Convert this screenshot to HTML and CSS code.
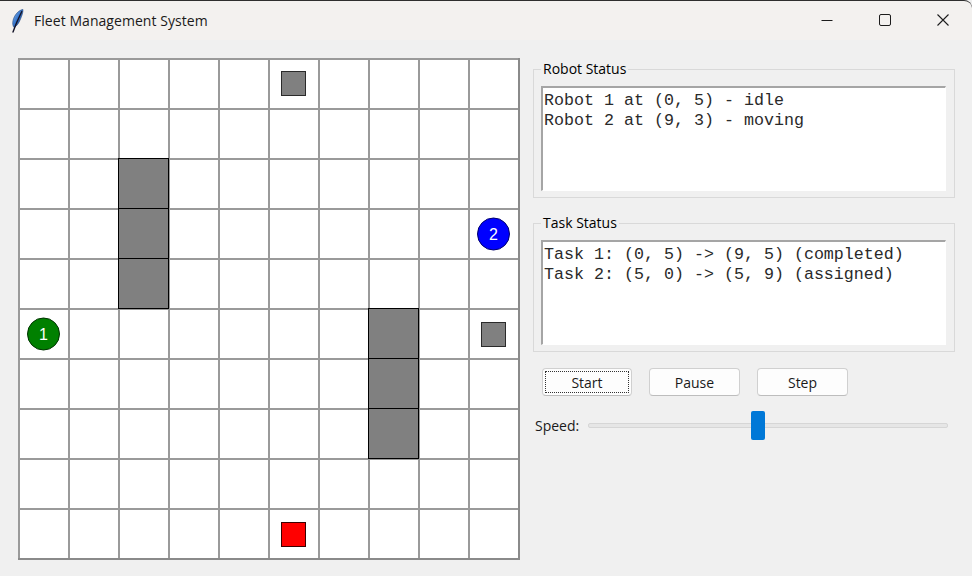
FILE: index.html
```html
<!DOCTYPE html>
<html>
<head>
<meta charset="utf-8">
<title>Fleet Management System</title>
<link rel="stylesheet" href="styles.css">
</head>
<body>
<div class="window">
  <div class="titlebar">
    <svg class="app-icon" width="14" height="26" viewBox="0 0 14 26">
      <defs>
        <linearGradient id="fg" x1="0" y1="0" x2="1" y2="1">
          <stop offset="0" stop-color="#9cc4f0"/>
          <stop offset="0.45" stop-color="#3b7bd0"/>
          <stop offset="1" stop-color="#1a3a7a"/>
        </linearGradient>
      </defs>
      <path d="M13 1.5 C 9 2, 4.5 6.5, 3 12.5 C 2.3 15.5, 2.8 18, 4 19.5 C 6.5 18.5, 9 15, 10.5 11 C 12 7.5, 13 4.5, 13 1.5 Z" fill="url(#fg)" stroke="#24467e" stroke-width="0.6"/>
      <path d="M11.8 3.5 C 9 9, 6.5 14, 3 24" stroke="#141428" stroke-width="1.4" fill="none" stroke-linecap="round"/>
    </svg>
    <span class="title">Fleet Management System</span>
    <div class="caption">
      <div class="cbtn">
        <svg width="12" height="12" viewBox="0 0 12 12"><path d="M0.5 6.5 H11.5" stroke="#1c1c1c" stroke-width="1"/></svg>
      </div>
      <div class="cbtn">
        <svg width="12" height="12" viewBox="0 0 12 12"><rect x="0.5" y="0.5" width="11" height="11" rx="1.5" fill="none" stroke="#1c1c1c" stroke-width="1"/></svg>
      </div>
      <div class="cbtn">
        <svg width="12" height="12" viewBox="0 0 12 12"><path d="M0.5 0.5 L11.5 11.5 M11.5 0.5 L0.5 11.5" stroke="#1c1c1c" stroke-width="1.1"/></svg>
      </div>
    </div>
  </div>

  <div class="client">
    <svg class="map" width="502" height="502" viewBox="0 0 502 502">
      <defs>
        <pattern id="grid" width="50" height="50" patternUnits="userSpaceOnUse">
          <rect width="50" height="50" fill="#ffffff"/>
          <rect width="2" height="50" fill="#9a9a9a"/>
          <rect width="50" height="2" fill="#9a9a9a"/>
        </pattern>
      </defs>
      <rect width="502" height="502" fill="url(#grid)"/>
      <rect x="500" y="0" width="2" height="502" fill="#8a8a8a"/>
      <rect x="0" y="500" width="502" height="2" fill="#8a8a8a"/>

      <g fill="#808080" stroke="#000000" stroke-width="1">
        <rect x="100.5" y="100.5" width="50" height="50"/>
        <rect x="100.5" y="150.5" width="50" height="50"/>
        <rect x="100.5" y="200.5" width="50" height="50"/>
        <rect x="350.5" y="250.5" width="50" height="50"/>
        <rect x="350.5" y="300.5" width="50" height="50"/>
        <rect x="350.5" y="350.5" width="50" height="50"/>
      </g>

      <rect x="263.5" y="13.5" width="24" height="24" fill="#808080" stroke="#2a2a2a" stroke-width="1"/>
      <rect x="463.5" y="264.5" width="24" height="24" fill="#808080" stroke="#2a2a2a" stroke-width="1"/>
      <rect x="263.5" y="464.5" width="24" height="24" fill="#ff0000" stroke="#3a0000" stroke-width="1"/>

      <circle cx="25.5" cy="276" r="16" fill="#008000" stroke="#003300" stroke-width="1"/>
      <text x="25.5" y="281.5" class="robot-num">1</text>
      <circle cx="475.5" cy="176" r="16" fill="#0000ff" stroke="#00006b" stroke-width="1"/>
      <text x="475.5" y="181.5" class="robot-num">2</text>
    </svg>

    <div class="side">
      <fieldset class="group">
        <legend>Robot Status</legend>
        <div class="textbox">Robot 1 at (0, 5) - idle
Robot 2 at (9, 3) - moving</div>
      </fieldset>

      <fieldset class="group group-task">
        <legend>Task Status</legend>
        <div class="textbox">Task 1: (0, 5) -&gt; (9, 5) (completed)
Task 2: (5, 0) -&gt; (5, 9) (assigned)</div>
      </fieldset>

      <div class="buttons">
        <button class="btn btn-focus"><span class="focus-ring">Start</span></button>
        <button class="btn">Pause</button>
        <button class="btn">Step</button>
      </div>

      <div class="speed">
        <span class="speed-label">Speed:</span>
        <div class="scale">
          <div class="trough"></div>
          <div class="thumb" style="left: 163px;"></div>
        </div>
      </div>
    </div>
  </div>
</div>
</body>
</html>
```

FILE: styles.css
```css
* {
  box-sizing: border-box;
}

html, body {
  margin: 0;
  padding: 0;
}

body {
  width: 972px;
  height: 576px;
  overflow: hidden;
  background: #f0f0f0;
  font-family: "Open Sans", "Noto Sans", "Liberation Sans", sans-serif;
  color: #000;
}

.window {
  width: 972px;
  height: 576px;
  display: flex;
  flex-direction: column;
  background: #f0f0f0;
}

.titlebar {
  height: 40px;
  flex: none;
  display: flex;
  align-items: center;
  background: #f3f1ef;
  border-top: 1px solid #2e2e2e;
  border-top-right-radius: 8px;
}

.app-icon {
  margin-left: 10px;
  margin-top: 1px;
  flex: none;
}

.title {
  margin-left: 10px;
  font-size: 14px;
  color: #1a1a1a;
  letter-spacing: 0.05px;
}

.caption {
  margin-left: auto;
  display: flex;
  height: 100%;
}

.cbtn {
  width: 58px;
  height: 100%;
  display: flex;
  align-items: center;
  justify-content: center;
  padding-bottom: 1px;
}

.client {
  flex: 1;
  display: flex;
  align-items: flex-start;
  padding: 18px 0 0 18px;
}

.map {
  display: block;
  flex: none;
}

.robot-num {
  font-family: "Liberation Sans", Arial, sans-serif;
  font-size: 16px;
  fill: #ffffff;
  text-anchor: middle;
}

.side {
  width: 422px;
  margin-left: 13px;
  margin-top: 2px;
  display: flex;
  flex-direction: column;
}

.group {
  margin: 0;
  min-width: 0;
  border: 1px solid #d9d9d9;
  padding: 8px 8px 6px 7px;
}

.group legend {
  font-size: 14px;
  line-height: 18px;
  padding: 0 2px;
  margin-left: 0;
  color: #000;
}

.group-task {
  margin-top: 16px;
}

.textbox {
  height: 105px;
  background: #ffffff;
  border-top: 2px solid #a5a5a5;
  border-left: 2px solid #a5a5a5;
  border-right: 1px solid #ffffff;
  border-bottom: 1px solid #ffffff;
  padding: 3px 0 0 1px;
  font-family: "Liberation Mono", "Courier New", monospace;
  font-size: 16.67px;
  line-height: 20px;
  white-space: pre;
  color: #2a2a2a;
}

.buttons {
  display: flex;
  gap: 17px;
  margin-top: 16px;
  margin-left: 9px;
}

.btn {
  width: 91px;
  height: 28px;
  background: #fdfdfd;
  border: 1px solid #d0d0d0;
  border-bottom-color: #bdbdbd;
  border-radius: 4px;
  font-family: "Open Sans", "Noto Sans", "Liberation Sans", sans-serif;
  font-size: 14px;
  color: #1a1a1a;
  padding: 0;
  display: flex;
  align-items: center;
  justify-content: center;
}

.btn-focus {
  width: 90px;
  padding: 2px;
}

.focus-ring {
  width: 100%;
  height: 100%;
  border: 1px dotted #333;
  display: flex;
  align-items: center;
  justify-content: center;
}

.speed {
  display: flex;
  align-items: center;
  margin-top: 15px;
  height: 29px;
}

.speed-label {
  font-size: 14px;
  margin-left: 2px;
  color: #1a1a1a;
}

.scale {
  position: relative;
  width: 360px;
  height: 29px;
  margin-left: 9px;
  display: flex;
  align-items: center;
}

.trough {
  width: 100%;
  height: 5px;
  background: #e6e6e6;
  border: 1px solid #d6d6d6;
  border-radius: 2px;
}

.thumb {
  position: absolute;
  top: 0;
  width: 14px;
  height: 29px;
  background: #0078d7;
  border-radius: 2px;
}
```
